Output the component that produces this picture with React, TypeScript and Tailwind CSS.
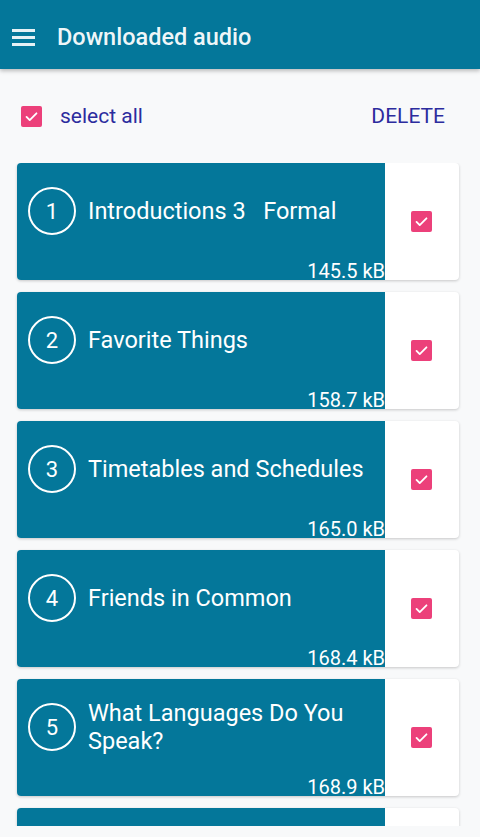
import React from 'react';

const items = [
  { n: 1, title: 'Introductions 3   Formal', size: '145.5 kB' },
  { n: 2, title: 'Favorite Things', size: '158.7 kB' },
  { n: 3, title: 'Timetables and Schedules', size: '165.0 kB' },
  { n: 4, title: 'Friends in Common', size: '168.4 kB' },
  { n: 5, title: 'What Languages Do You Speak?', size: '168.9 kB' },
  { n: 6, title: 'Talking About Family', size: '170.2 kB' },
];

function CheckBox() {
  return (
    <div className="w-[21px] h-[21px] rounded-[2px] bg-[#ec407a] flex items-center justify-center">
      <svg viewBox="0 0 24 24" className="w-[17px] h-[17px]" fill="none" stroke="white" strokeWidth="2.6" strokeLinecap="round" strokeLinejoin="round">
        <path d="M5 12.5l4.5 4.5L19 7.5" />
      </svg>
    </div>
  );
}

export default function App() {
  return (
    <div className="w-[480px] h-[837px] overflow-hidden bg-[#f8f9fa] font-['Roboto',sans-serif]">
      {/* toolbar */}
      <header className="h-[69px] pt-[6px] bg-[#04779a] flex items-center shadow-[0_2px_4px_rgba(0,0,0,0.25)] relative z-10">
        <div className="ml-[12px] w-[23px] flex flex-col gap-[4px]">
          <div className="h-[3px] bg-white/90" />
          <div className="h-[3px] bg-white/90" />
          <div className="h-[3px] bg-white/90" />
        </div>
        <h1 className="ml-[22px] text-[23.5px] font-medium text-white/95">Downloaded audio</h1>
      </header>

      {/* select all row */}
      <div className="h-[94px] flex items-center pl-[21px] pr-[35px]">
        <CheckBox />
        <span className="ml-[18px] mt-[2px] text-[21px] text-[#2c2c9e]">select all</span>
        <span className="ml-auto mt-[2px] text-[21px] text-[#2c2c9e]">DELETE</span>
      </div>

      {/* list */}
      <div className="h-[663px] overflow-hidden">
        <div className="flex flex-col gap-[12px] ml-[17px] mr-[21px]">
          {items.map((it) => (
            <div key={it.n} className="h-[117px] flex rounded-[4px] overflow-hidden bg-white shadow-[0_1px_3px_rgba(0,0,0,0.2)] shrink-0">
              <div className="w-[368px] bg-[#04779a] flex flex-col text-white">
                <div className="h-[96px] flex items-center pl-[11px]">
                  <div className="w-[48px] h-[48px] shrink-0 rounded-full border-2 border-white flex items-center justify-center text-[22px]">
                    {it.n}
                  </div>
                  <div className="ml-[12px] pr-[8px] text-[23.5px] leading-[28px] whitespace-pre-wrap">{it.title}</div>
                </div>
                <div className="flex-1 flex items-end justify-end">
                  <span className="text-[20px] leading-[17px]">{it.size}</span>
                </div>
              </div>
              <div className="flex-1 flex items-center justify-center pr-[2px]">
                <CheckBox />
              </div>
            </div>
          ))}
        </div>
      </div>
    </div>
  );
}
